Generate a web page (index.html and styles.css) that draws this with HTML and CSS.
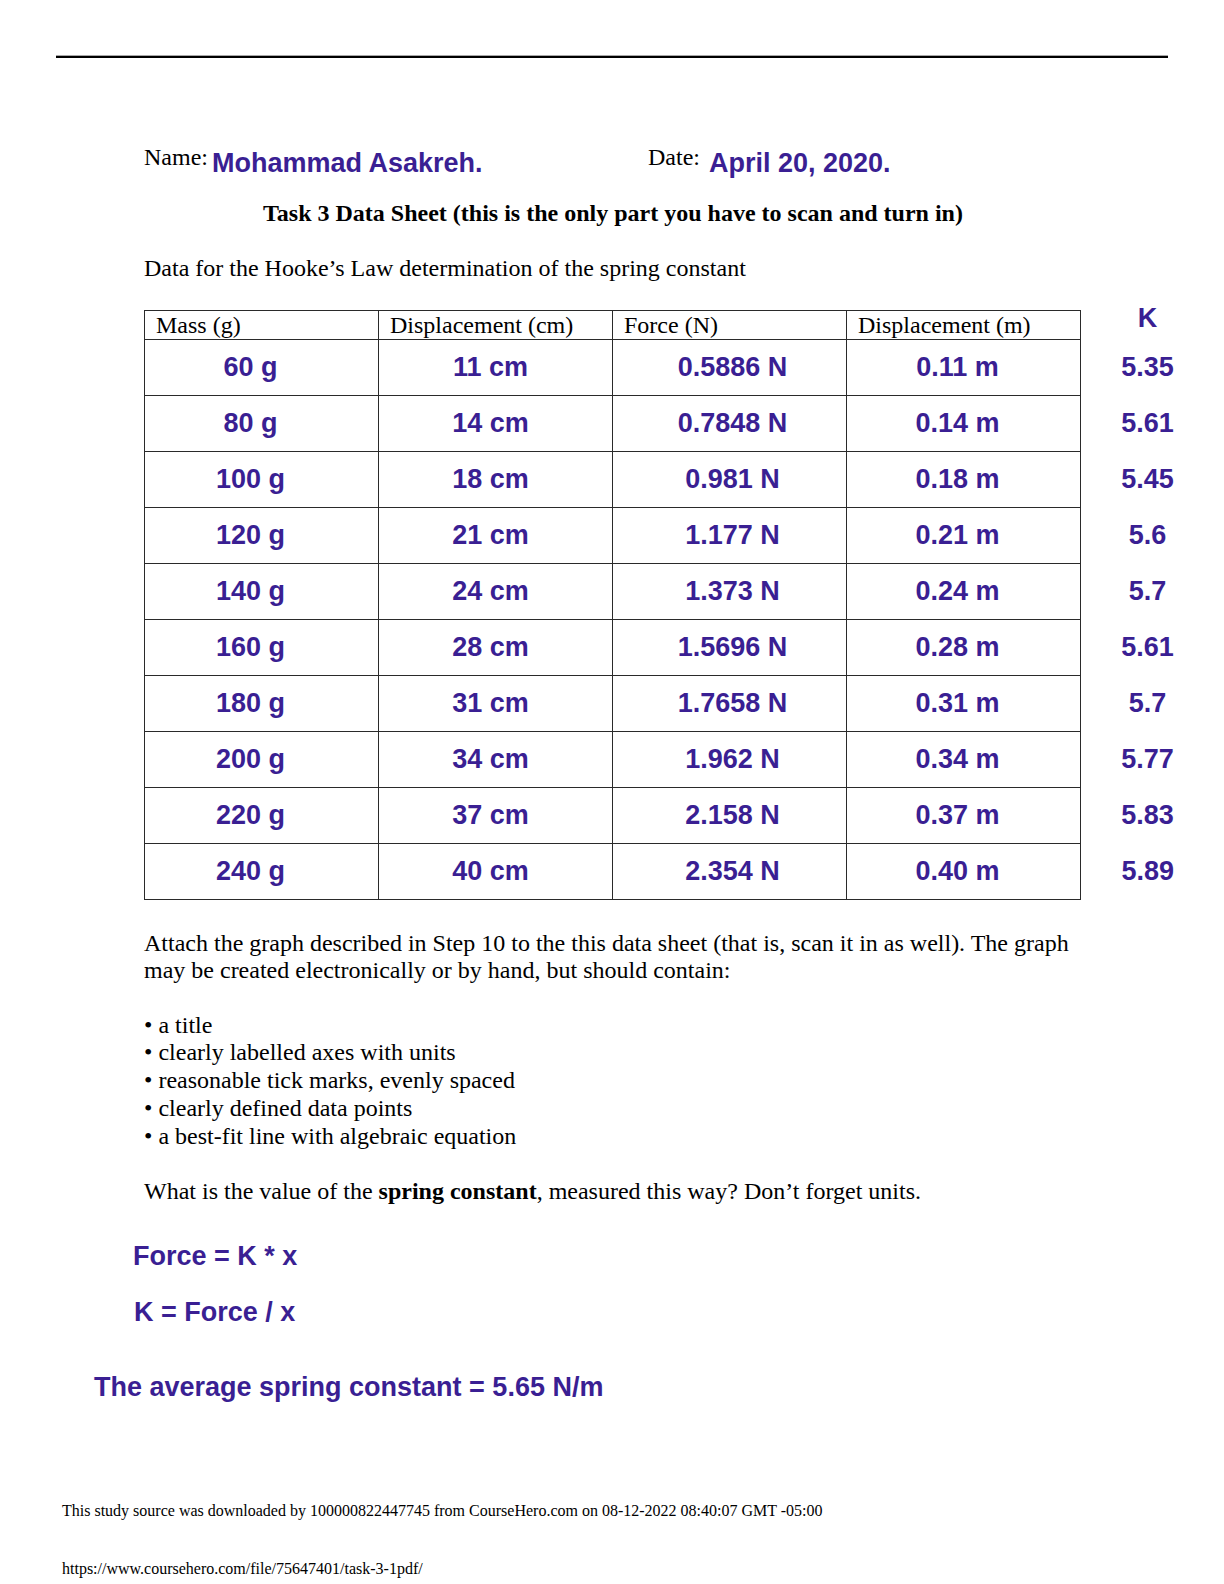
FILE: index.html
```html
<!DOCTYPE html>
<html lang="en">
<head>
<meta charset="utf-8">
<title>Task 3 Data Sheet</title>
<link rel="stylesheet" href="styles.css">
</head>
<body>
<div class="page">
  <div class="rule"></div>

  <div class="name-row">
    <span class="field field-name"><span class="label">Name:</span><span class="answer">Mohammad Asakreh.</span></span><span class="field"><span class="label">Date:</span><span class="answer answer-date">April 20, 2020.</span></span>
  </div>

  <h1 class="title">Task 3 Data Sheet (this is the only part you have to scan and turn in)</h1>

  <p class="text intro">Data for the Hooke’s Law determination of the spring constant</p>

  <table class="data">
    <colgroup>
      <col class="c"><col class="c"><col class="c"><col class="c"><col class="ck">
    </colgroup>
    <thead>
      <tr>
        <th>Mass (g)</th>
        <th>Displacement (cm)</th>
        <th>Force (N)</th>
        <th>Displacement (m)</th>
        <th class="k"><div class="k-head">K</div></th>
      </tr>
    </thead>
    <tbody>
      <tr><td class="v1">60 g</td><td class="v2">11 cm</td><td class="v3">0.5886 N</td><td class="v4">0.11 m</td><td class="k">5.35</td></tr>
      <tr><td class="v1">80 g</td><td class="v2">14 cm</td><td class="v3">0.7848 N</td><td class="v4">0.14 m</td><td class="k">5.61</td></tr>
      <tr><td class="v1">100 g</td><td class="v2">18 cm</td><td class="v3">0.981 N</td><td class="v4">0.18 m</td><td class="k">5.45</td></tr>
      <tr><td class="v1">120 g</td><td class="v2">21 cm</td><td class="v3">1.177 N</td><td class="v4">0.21 m</td><td class="k">5.6</td></tr>
      <tr><td class="v1">140 g</td><td class="v2">24 cm</td><td class="v3">1.373 N</td><td class="v4">0.24 m</td><td class="k">5.7</td></tr>
      <tr><td class="v1">160 g</td><td class="v2">28 cm</td><td class="v3">1.5696 N</td><td class="v4">0.28 m</td><td class="k">5.61</td></tr>
      <tr><td class="v1">180 g</td><td class="v2">31 cm</td><td class="v3">1.7658 N</td><td class="v4">0.31 m</td><td class="k">5.7</td></tr>
      <tr><td class="v1">200 g</td><td class="v2">34 cm</td><td class="v3">1.962 N</td><td class="v4">0.34 m</td><td class="k">5.77</td></tr>
      <tr><td class="v1">220 g</td><td class="v2">37 cm</td><td class="v3">2.158 N</td><td class="v4">0.37 m</td><td class="k">5.83</td></tr>
      <tr><td class="v1">240 g</td><td class="v2">40 cm</td><td class="v3">2.354 N</td><td class="v4">0.40 m</td><td class="k">5.89</td></tr>
    </tbody>
  </table>

  <p class="text attach">Attach the graph described in Step 10 to the this data sheet (that is, scan it in as well). The graph<br>may be created electronically or by hand, but should contain:</p>

  <ul class="bullets">
    <li>• a title</li>
    <li>• clearly labelled axes with units</li>
    <li>• reasonable tick marks, evenly spaced</li>
    <li>• clearly defined data points</li>
    <li>• a best-fit line with algebraic equation</li>
  </ul>

  <p class="text question">What is the value of the <b>spring constant</b>, measured this way? Don’t forget units.</p>

  <p class="answer-line formula1">Force = K * x</p>
  <p class="answer-line formula2">K = Force / x</p>
  <p class="answer-line average">The average spring constant = 5.65 N/m</p>

  <p class="footer footer-source">This study source was downloaded by 100000822447745 from CourseHero.com on 08-12-2022 08:40:07 GMT -05:00</p>
  <p class="footer footer-url">https://www.coursehero.com/file/75647401/task-3-1pdf/</p>
</div>
</body>
</html>
```

FILE: styles.css
```css
html, body {
  margin: 0;
  padding: 0;
  background: #ffffff;
}

body {
  font-family: "Liberation Serif", "Times New Roman", serif;
  font-size: 24px;
  color: #000;
}

.page {
  width: 1224px;
  min-height: 1584px;
}

.rule {
  margin: 55px 56px 0 56px;
  height: 2px;
  background: #000;
  border-top: 1px solid #a8a8a8;
}

.name-row {
  margin: 87px 0 0 144px;
  height: 37px;
  line-height: 36px;
  white-space: nowrap;
}

.field {
  display: inline-block;
}

.field-name {
  width: 504px;
}

.label {
  font-size: 24px;
  line-height: 24px;
  vertical-align: 7px;
  margin-right: 4px;
}

.answer {
  font-family: "Liberation Sans", Arial, sans-serif;
  font-weight: bold;
  font-size: 27px;
  color: #3a1f93;
}

.answer-date {
  margin-left: 5px;
}

.title {
  margin: 18px 0 0 0;
  font-size: 24px;
  line-height: 27px;
  font-weight: bold;
  text-align: center;
  padding-left: 2px;
}

.text {
  margin: 0 0 0 144px;
  line-height: 27.5px;
}

.intro {
  margin-top: 28px;
}

.data {
  margin: 27px 0 0 144px;
  border-collapse: collapse;
  table-layout: fixed;
}

.data col.c {
  width: 234px;
}

.data col.ck {
  width: 134px;
}

.data th {
  height: 27px;
  padding: 0 0 0 11px;
  border: 1px solid #2a2a2a;
  font-weight: normal;
  text-align: left;
  line-height: 28px;
  vertical-align: top;
  white-space: nowrap;
}

.data td {
  height: 55px;
  border: 1px solid #2a2a2a;
  font-family: "Liberation Sans", Arial, sans-serif;
  font-weight: bold;
  font-size: 27px;
  line-height: 30px;
  color: #3a1f93;
  text-align: center;
  vertical-align: middle;
  padding: 0;
}

.data td.v1 { padding-right: 22px; }
.data td.v2 { padding-right: 10px; }
.data td.v3 { padding-left: 6px; }
.data td.v4 { padding-right: 12px; }

.data .k,
.data th.k {
  border: none;
  text-align: center;
  padding: 0;
}

.k-head {
  font-family: "Liberation Sans", Arial, sans-serif;
  font-weight: bold;
  font-size: 27px;
  line-height: 30px;
  color: #3a1f93;
  margin-top: -7px;
}

.attach {
  margin-top: 30px;
}

.bullets {
  list-style: none;
  margin: 27px 0 0 144px;
  padding: 0;
  line-height: 27.8px;
}

.question {
  margin-top: 28px;
}

.answer-line {
  margin: 0;
  font-family: "Liberation Sans", Arial, sans-serif;
  font-weight: bold;
  font-size: 27px;
  line-height: 32px;
  color: #3a1f93;
}

.formula1 {
  margin: 34px 0 0 133px;
}

.formula2 {
  margin: 24px 0 0 134px;
}

.average {
  margin: 43px 0 0 94px;
  font-size: 27px;
  line-height: 32px;
}

.footer {
  margin: 0 0 0 62px;
  font-size: 16px;
  line-height: 20px;
}

.footer-source {
  margin-top: 98px;
}

.footer-url {
  margin-top: 38px;
}
```
